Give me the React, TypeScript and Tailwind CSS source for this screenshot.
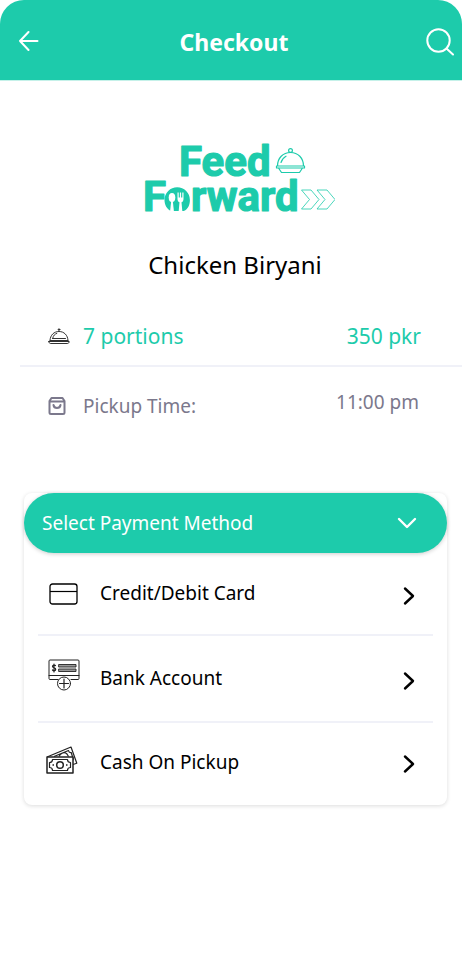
import type { ReactNode } from "react";

function Logo() {
  return (
    <svg
      width="200"
      height="92"
      viewBox="0 -8 200 92"
      role="img"
      aria-label="Feed Forward"
      fill="none"
      className="font-['Roboto',sans-serif] font-bold text-[#1dcbab]"
    >
      <g fill="currentColor" stroke="currentColor" strokeWidth="1.200" strokeLinejoin="round" fontSize="42">
        <text x="44" y="35">Feed</text>
        <text x="8" y="70">F</text>
        <text x="56" y="70">rward</text>
      </g>
      <path
        d="M36 70c-4-2-6.500-6-6.500-11a12.700 12.700 0 0 1 25.400 0c0 5-2 9-6 11z"
        fill="currentColor"
      />
      <g fill="white">
        <ellipse cx="37" cy="56.500" rx="3.300" ry="4.500" />
        <path d="M36.200 60h1.600l1.200 11h-4z" />
        <path d="M42.500 51.500h1.200v5h1.200v-5h1.200v5h1.200v-5h1.200v6.500c0 2-1 3-2 3.200l.9 9.800h-3.800l.9-9.800c-1-.2-2-1.200-2-3.200z" />
      </g>
      <g stroke="currentColor" strokeWidth="1.200" strokeLinecap="round" strokeLinejoin="round">
        <circle cx="155.500" cy="9.500" r="1.900" />
        <path d="M142.500 25c0-8 5.500-13.500 13-13.500S168.500 17 168.500 25M146 21.500c.9-3 2.500-5 5-6.300M141.500 25h28v2h-28zM143.500 27l3 4.500h18l3-4.500" />
      </g>
      <path
        d="M166.500 49h9.500l8 9.500-8 9.500h-9.500l8-9.500zM182 49h10l8 9.500-8 9.500h-10l8-9.500z"
        stroke="currentColor"
        strokeWidth=".8"
      />
    </svg>
  );
}

function DishIcon() {
  return (
    <svg width="22" height="17" viewBox="0 0 22 17" fill="none" stroke="#333" strokeLinecap="round" strokeLinejoin="round" aria-hidden="true">
      <circle cx="11" cy="1.600" r=".8" fill="#333" />
      <path d="M2 12.300C2.300 7 6 3.500 11 3.500s8.700 3.500 9 8.800M4.800 10c.5-2.500 2-4 4-4.600M4.500 10.500h13M2 12.500h18M.8 13.500h20.400c0 1.300-.8 2-2 2H2.800c-1.200 0-2-.7-2-2z" />
    </svg>
  );
}

function BagIcon() {
  return (
    <svg width="18" height="20" viewBox="0 0 18 20" fill="none" stroke="#7b788c" strokeWidth="2" strokeLinecap="round" strokeLinejoin="round" aria-hidden="true">
      <path d="M3.500 2h11L16.500 5v11.500c0 1-.7 1.500-1.500 1.500H3c-.8 0-1.500-.5-1.500-1.500V5zM1.500 5.500h15" />
      <path d="M5.500 9c.3 2 1.500 3 3.500 3s3.200-1 3.500-3" />
    </svg>
  );
}

function CardIcon() {
  return (
    <svg width="30" height="22" viewBox="0 0 30 22" fill="none" stroke="black" aria-hidden="true">
      <rect x="1" y="1" width="27" height="20" rx="2.500" strokeWidth="1.300" />
      <path d="M1 8.500h27" strokeWidth="1.200" />
    </svg>
  );
}

function BankIcon() {
  return (
    <svg width="32" height="32" viewBox="0 0 32 32" fill="none" stroke="#222" strokeLinecap="round" className="mb-2" aria-hidden="true">
      <path d="M10 20.500H2a1 1 0 0 1-1-1V2a1 1 0 0 1 1-1h28a1 1 0 0 1 1 1v17.500a1 1 0 0 1-1 1h-7M1 16.500h30" />
      <path d="M7.500 6.500C6.500 5.700 4.500 6 4.500 7.500s3.200 1 3.200 2.700-2.200 2-3.200.8M6 5v8" strokeWidth="1.200" />
      <path d="M11 5.500h17v2.500H11zM11 10h17v2.500H11z" fill="#999" strokeWidth=".9" />
      <circle cx="16" cy="24.500" r="6.500" fill="white" />
      <path d="M16 20v9M11.500 24.500h9" strokeWidth="1.200" />
    </svg>
  );
}

function CashIcon() {
  return (
    <svg width="32" height="28" viewBox="0 0 32 28" fill="none" stroke="#222" strokeWidth="1.200" strokeLinejoin="round" className="mr-1 mb-1" aria-hidden="true">
      <path d="M1 11L25 1l5.800 16.200L27 18.500M8 10.500L22.500 4.500c.3 1.700 1.200 2.200 2.700 2l2 6.500-.6 1.500M13 10.500c1.500-3.500 5.500-5 8-2.500l1.500 2.500" />
      <rect x="1" y="11" width="26" height="16" fill="white" strokeWidth="1.500" />
      <path d="M6.500 13.500h15c0 2 1 3 3 3v5c-2 0-3 1-3 3h-15c0-2-1-3-3-3v-5c2 0 3-1 3-3z" />
      <circle cx="14" cy="19" r="3.300" strokeWidth="1.500" />
      <path d="M6.500 19H8M20 19h1.500" strokeWidth="1.500" />
    </svg>
  );
}

function ChevronRight() {
  return (
    <svg width="12" height="20" viewBox="0 0 12 20" fill="none" stroke="black" strokeWidth="2.400" strokeLinecap="round" strokeLinejoin="round" aria-hidden="true">
      <path d="M2 2.500l8 7.500-8 7.500" />
    </svg>
  );
}

function PaymentOption({ icon, label }: { icon: ReactNode; label: string }) {
  return (
    <button type="button" className="flex h-full w-full items-center pr-[18px] pl-2 text-left">
      <span className="flex w-9 shrink-0 justify-center">{icon}</span>
      <span className="ml-[18px] grow">{label}</span>
      <span className="mt-1">
        <ChevronRight />
      </span>
    </button>
  );
}

export default function App() {
  return (
    <div className="min-h-screen bg-white font-['Noto_Sans',sans-serif] text-black">
      <header className="flex h-20 items-center justify-between rounded-t-3xl bg-[#1dcbab] pr-2 pl-[18px] text-white shadow-[0_1px_0_#c5f1e9]">
        <button type="button" aria-label="Back" className="flex w-6">
          <svg width="22" height="22" viewBox="0 0 22 22" fill="none" stroke="currentColor" strokeWidth="2" strokeLinecap="round" strokeLinejoin="round">
            <path d="M19.500 12H2M10.500 3L2 12l8.500 9" />
          </svg>
        </button>
        <h1 className="pt-1 text-[23px] leading-8 font-bold">Checkout</h1>
        <button type="button" aria-label="Search" className="pt-1">
          <svg width="28" height="28" viewBox="0 0 28 28" fill="none" stroke="currentColor" strokeWidth="2" strokeLinecap="round">
            <circle cx="12.500" cy="12.500" r="11.200" />
            <path d="M20.500 20.500l6.500 6" />
          </svg>
        </button>
      </header>

      <main>
        <section className="flex flex-col items-center pt-[53px] pl-2">
          <Logo />
          <h2 className="mt-6 text-2xl">Chicken Biryani</h2>
        </section>

        <section className="mt-6 ml-5">
          <div className="flex h-[62px] items-center border-b-2 border-[#f0f1f8] pt-[3px] pr-[41px] pl-7 text-[21px] text-[#1dcbab]">
            <DishIcon />
            <span className="ml-[13px] grow">7 portions</span>
            <span>350 pkr</span>
          </div>
          <div className="flex h-[78px] items-center pr-[43px] pl-7 text-[19px] text-[#7b788c]">
            <BagIcon />
            <span className="ml-[17px] grow">Pickup Time:</span>
            <span className="pb-2">11:00 pm</span>
          </div>
        </section>

        <section className="mt-12 mr-[15px] ml-6 rounded-lg bg-white text-[19px] shadow-[0_1px_4px_rgba(0,0,0,0.14)]">
          <button type="button" aria-expanded="true" className="flex h-[60px] w-full items-center justify-between rounded-full bg-[#1dcbab] pr-[30px] pl-[18px] text-white shadow-[0_1px_4px_rgba(0,0,0,0.2)]">
            <span>Select Payment Method</span>
            <svg width="20" height="12" viewBox="0 0 20 12" fill="none" stroke="currentColor" strokeWidth="2.400" strokeLinecap="round" strokeLinejoin="round" aria-hidden="true">
              <path d="M2 2l8 8 8-8" />
            </svg>
          </button>
          <ul className="mx-[14px]">
            <li className="h-[83px] border-b-2 border-[#f0f1f8]">
              <PaymentOption icon={<CardIcon />} label="Credit/Debit Card" />
            </li>
            <li className="h-[87px] border-b-2 border-[#f0f1f8]">
              <PaymentOption icon={<BankIcon />} label="Bank Account" />
            </li>
            <li className="h-[82px] pb-1">
              <PaymentOption icon={<CashIcon />} label="Cash On Pickup" />
            </li>
          </ul>
        </section>
      </main>
    </div>
  );
}
